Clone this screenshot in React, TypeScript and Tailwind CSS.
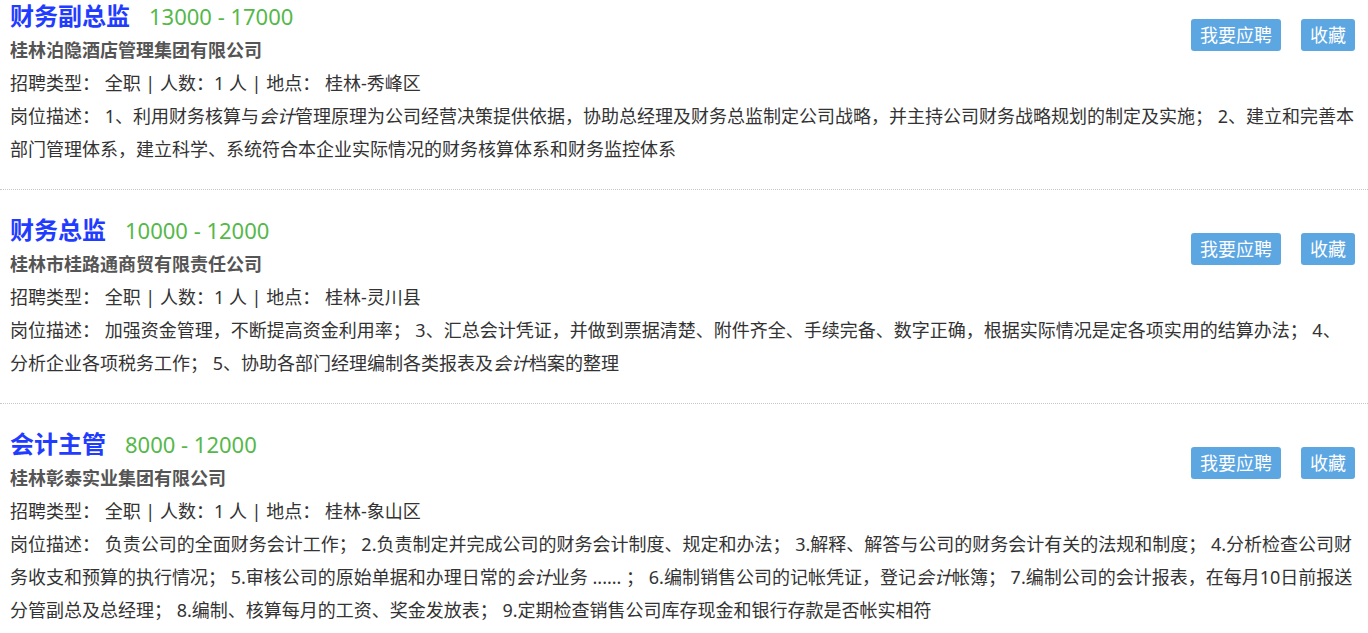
import React from 'react';

type Job = {
    title: string;
    salary: string;
    company: string;
    location: string;
    desc: React.ReactNode;
};

const K = ({ children }: { children: React.ReactNode }) => <i>{children}</i>;

const jobs: Job[] = [
    {
        title: '财务副总监',
        salary: '13000 - 17000',
        company: '桂林泊隐酒店管理集团有限公司',
        location: '桂林-秀峰区',
        desc: (
            <>
                1、利用财务核算与<K>会计</K>管理原理为公司经营决策提供依据，协助总经理及财务总监制定公司战略，并主持公司财务战略规划的制定及实施； 2、建立和完善本部门管理体系，建立科学、系统符合本企业实际情况的财务核算体系和财务监控体系
            </>
        ),
    },
    {
        title: '财务总监',
        salary: '10000 - 12000',
        company: '桂林市桂路通商贸有限责任公司',
        location: '桂林-灵川县',
        desc: (
            <>
                加强资金管理，不断提高资金利用率； 3、汇总会计凭证，并做到票据清楚、附件齐全、手续完备、数字正确，根据实际情况是定各项实用的结算办法； 4、分析企业各项税务工作； 5、协助各部门经理编制各类报表及<K>会计</K>档案的整理
            </>
        ),
    },
    {
        title: '会计主管',
        salary: '8000 - 12000',
        company: '桂林彰泰实业集团有限公司',
        location: '桂林-象山区',
        desc: (
            <>
                负责公司的全面财务会计工作； 2.负责制定并完成公司的财务会计制度、规定和办法； 3.解释、解答与公司的财务会计有关的法规和制度； 4.分析检查公司财务收支和预算的执行情况； 5.审核公司的原始单据和办理日常的<K>会计</K>业务 ...... ； 6.编制销售公司的记帐凭证，登记<K>会计</K>帐簿； 7.编制公司的会计报表，在每月10日前报送分管副总及总经理； 8.编制、核算每月的工资、奖金发放表； 9.定期检查销售公司库存现金和银行存款是否帐实相符
            </>
        ),
    },
];

function JobItem({ job }: { job: Job }) {
    return (
        <div className="border-b border-dotted border-[#c8c8c8] pt-[22px] pb-[23px] pl-[10px] pr-[13px]">
            <div className="flex justify-between">
                <div>
                    <div className="flex items-center h-[36px]">
                        <span className="text-[24px] font-bold text-[#1f3cff]">{job.title}</span>
                        <span className="ml-[19px] text-[22px] text-[#55b84a]">{job.salary}</span>
                    </div>
                    <div className="text-[18px] leading-[33px] font-bold text-[#555]">{job.company}</div>
                </div>
                <div className="flex gap-[20px] mt-[21px]">
                    <button className="h-[32px] px-[9px] rounded-[3px] bg-[#5ca6e2] text-white text-[18px] leading-[32px]">我要应聘</button>
                    <button className="h-[32px] px-[9px] rounded-[3px] bg-[#5ca6e2] text-white text-[18px] leading-[32px]">收藏</button>
                </div>
            </div>
            <div className="text-[18px] leading-[33px] text-[#333]">
                招聘类型：&nbsp;全职 | 人数：1 人 | 地点：&nbsp;{job.location}
            </div>
            <div className="text-[18px] leading-[33px] text-[#333]">
                岗位描述：&nbsp;{job.desc}
            </div>
        </div>
    );
}

export default function App() {
    return (
        <div className="w-[1368px] h-[633px] overflow-hidden bg-white" style={{ fontFamily: '"Noto Sans", "Noto Sans CJK SC", sans-serif' }}>
            <div className="-mt-[24px]">
                {jobs.map((j) => (
                    <JobItem key={j.title} job={j} />
                ))}
            </div>
        </div>
    );
}
